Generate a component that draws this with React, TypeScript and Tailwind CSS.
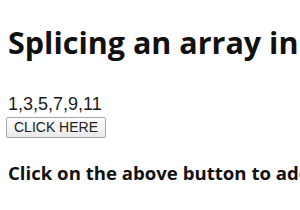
import React from 'react';

export default function App() {
    const nums = [1, 3, 5, 7, 9, 11];

    return (
        <div className="w-[300px] h-[210px] overflow-hidden bg-white text-black px-2">
            {/* heading */}
            <h1 className="mt-[22px] text-[30.5px] leading-[40px] font-bold whitespace-nowrap font-['Open_Sans',sans-serif] text-[#111]">
                Splicing an array in JavaScript
            </h1>

            <p className="mt-[32px] text-[18px] leading-[20px] font-['Liberation_Sans',Arial,sans-serif] text-[#1a1a1a]">
                {nums.join(',')}
            </p>

            <button
                type="button"
                className="mt-[3px] -ml-[2px] h-[21px] px-[7px] text-[14px] leading-[19px] border border-[#a9a9a9] rounded-[2px] bg-gradient-to-b from-white to-[#e9e9e9] text-[#222] font-['Liberation_Sans',Arial,sans-serif]"
            >
                CLICK HERE
            </button>

            <p className="mt-[23px] text-[18.6px] leading-[24px] font-bold whitespace-nowrap font-['Open_Sans',sans-serif] text-[#111]">
                Click on the above button to add and remove elements from the array
            </p>
        </div>
    );
}
